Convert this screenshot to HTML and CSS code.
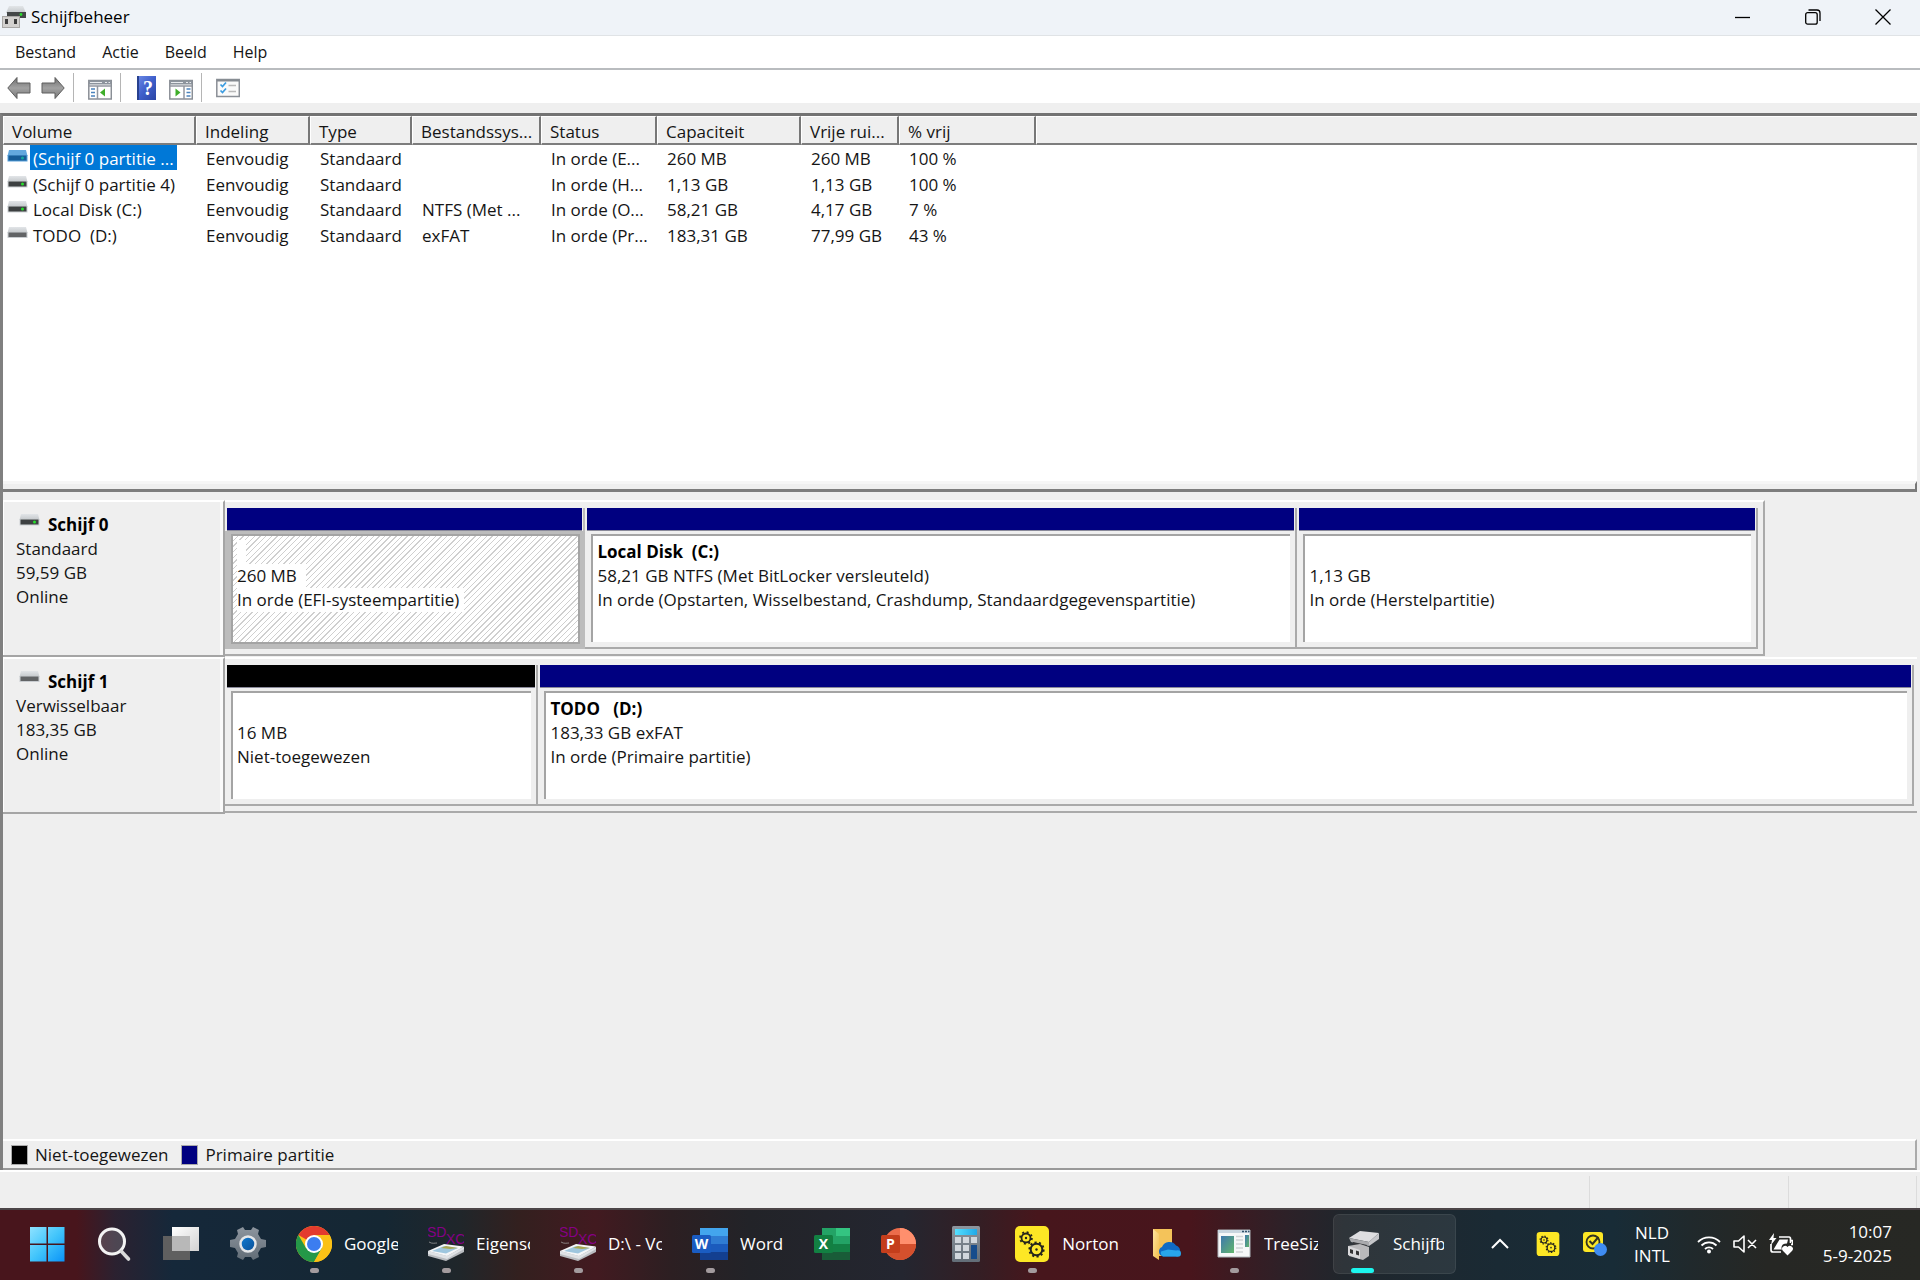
FILE: index.html
```html
<!DOCTYPE html>
<html lang="nl">
<head>
<meta charset="utf-8">
<title>Schijfbeheer</title>
<link rel="stylesheet" href="styles.css">
</head>
<body>
<svg class="defs" aria-hidden="true">
  <defs>
    <linearGradient id="metal" x1="0" y1="0" x2="0" y2="1"><stop offset="0" stop-color="#e2e5e8"/><stop offset="1" stop-color="#c3c7ca"/></linearGradient>
    <linearGradient id="arrow" x1="0" y1="0" x2="0" y2="1"><stop offset="0" stop-color="#6e6e6e"/><stop offset=".5" stop-color="#a2a2a2"/><stop offset="1" stop-color="#777"/></linearGradient>
    <linearGradient id="helpblue" x1="0" y1="0" x2="1" y2="1"><stop offset="0" stop-color="#6d8ae6"/><stop offset=".5" stop-color="#3f5fcb"/><stop offset="1" stop-color="#2a45a4"/></linearGradient>
    <linearGradient id="winblue" x1="0" y1="0" x2="1" y2="1"><stop offset="0" stop-color="#8fe2ff"/><stop offset=".5" stop-color="#42c5fb"/><stop offset="1" stop-color="#0a93f8"/></linearGradient>
    <linearGradient id="gearblue" x1="0" y1="0" x2="1" y2="1"><stop offset="0" stop-color="#0f7cd4"/><stop offset="1" stop-color="#0c4e94"/></linearGradient>
    <linearGradient id="gray" x1="0" y1="0" x2="0" y2="1"><stop offset="0" stop-color="#8d959e"/><stop offset="1" stop-color="#626d77"/></linearGradient>
    <linearGradient id="white" x1="0" y1="0" x2="1" y2="1"><stop offset="0" stop-color="#fff"/><stop offset="1" stop-color="#d2d2d2"/></linearGradient>
    <linearGradient id="folder" x1="0" y1="0" x2="1" y2="1"><stop offset="0" stop-color="#ffe5a0"/><stop offset="1" stop-color="#f3bd4c"/></linearGradient>
    <linearGradient id="tree" x1="0" y1="0" x2="1" y2="1"><stop offset="0" stop-color="#3f78ae"/><stop offset="1" stop-color="#62b56b"/></linearGradient>
    <linearGradient id="cyan" x1="0" y1="0" x2="1" y2="0"><stop offset="0" stop-color="#54e0ff"/><stop offset="1" stop-color="#21a9e8"/></linearGradient>

    <symbol id="disk" viewBox="0 0 21 14">
      <path d="M2 1h17l1.500 6h-20z" fill="url(#metal)"/>
      <path d="M.5 6h20v6.500h-20z" fill="#cdd1d4"/>
      <path d="M1.500 6.500h18v5h-18z" fill="#3d4041"/>
      <circle cx="15.500" cy="9" r="1.500" fill="#27e02b"/>
    </symbol>
    <symbol id="disk-blue" viewBox="0 0 21 14">
      <path d="M2 1h17l1.500 6h-20z" fill="#63a8de"/>
      <path d="M.5 6h20v6.500h-20z" fill="#569fd9"/>
      <path d="M1.500 6.500h18v5h-18z" fill="#175c97"/>
      <circle cx="15.500" cy="9" r="1.500" fill="#16a89d"/>
    </symbol>
    <symbol id="disk-card" viewBox="0 0 21 14">
      <path d="M2 1h17l1.500 6h-20z" fill="url(#metal)"/>
      <path d="M.5 6h20v6h-20z" fill="#c9cdd1"/>
      <path d="M1.500 6.500h18v4.500h-18z" fill="#626466"/>
    </symbol>
    <symbol id="gears" viewBox="0 0 36 36">
      <rect x="1" width="34" height="36" rx="5" fill="#fde725"/>
      <g fill="none" stroke="#23231d">
        <circle cx="12" cy="12" r="4.500" stroke-width="1.800"/>
        <circle cx="12" cy="12" r="5.900" stroke-width="1.800" stroke-dasharray="2 2.630"/>
        <circle cx="22.500" cy="23.500" r="5.800" stroke-width="2"/>
        <circle cx="22.500" cy="23.500" r="7.200" stroke-width="1.800" stroke-dasharray="2.200 2.320"/>
      </g>
      <circle cx="12" cy="12" r="1.200" fill="#23231d"/><circle cx="22.500" cy="23.500" r="1.200" fill="#23231d"/>
    </symbol>
    <symbol id="sdxc" viewBox="0 0 36 36">
      <path d="M0 25v5l18 5 18-9v-5z" fill="#b9bcc0"/>
      <path d="M0 25 16 18l20 2.500L19 30z" fill="#f5f6f7"/>
      <path d="M0 25l19 5 17-9v2L19 33 0 28z" fill="#dfe2e5"/>
      <path d="M4 25l12-5 14 2-12 5.500z" fill="#9ec6de"/>
      <path d="M13 22l5-2 12 2-8 1z" fill="#aaa750"/>
      <path d="M1 16c3 2 6 1 8 1" fill="none" stroke="#aaa" stroke-width=".7"/>
      <g class="sd-text"><text x="-1" y="11">SD</text><text x="18" y="18">XC</text></g>
    </symbol>
  </defs>
</svg>

<main class="window">
  <header class="titlebar">
    <svg class="app-icon" viewBox="0 0 24 24"><path d="M7 1h14l3 7H4z" fill="url(#metal)"/><path d="M5 7h19v6H5z" fill="#444748"/><circle cx="19" cy="9.500" r="1.400" fill="#28dc2d"/><path d="M0 11h18v12H0z" fill="#a9a7a5"/><path d="M1 12h16v10H1z" fill="#d3d1cf"/><path d="M3 14h3v5H3zM12 14h3v5h-3z" fill="#3d3d3d"/></svg>
    <h1 class="title">Schijfbeheer</h1>
    <div class="controls">
      <button type="button" aria-label="Minimaliseren"><svg viewBox="0 0 16 16"><path d="M0 8.500h15"/></svg></button>
      <button type="button" aria-label="Verkleinen"><svg viewBox="0 0 16 16"><rect x=".7" y="3.700" width="11.500" height="11.500" rx="2"/><path d="M3.500 1h8.500q3 0 3 3v8"/></svg></button>
      <button type="button" aria-label="Sluiten"><svg viewBox="0 0 16 16"><path d="M.5.5l15 15M15.500.5l-15 15"/></svg></button>
    </div>
  </header>

  <nav class="menubar">
    <button type="button">Bestand</button><button type="button">Actie</button><button type="button">Beeld</button><button type="button">Help</button>
  </nav>

  <div class="toolbar">
    <div class="group">
      <button type="button" aria-label="Vorige"><svg viewBox="0 0 24 24"><path d="M.8 12 10 1.500v5.500h13v10H10v5.500z" fill="url(#arrow)" stroke="#5e5e5e" stroke-linejoin="round"/></svg></button>
      <button type="button" aria-label="Volgende"><svg viewBox="0 0 24 24"><path d="M23.200 12 14 1.500v5.500H1v10h13v5.500z" fill="url(#arrow)" stroke="#5e5e5e" stroke-linejoin="round"/></svg></button>
    </div>
    <div class="group">
      <button type="button" aria-label="Consolestructuur"><svg viewBox="0 0 24 24"><path d="M.8 4.500h22.500V23H.8z" fill="#fff" stroke="#8a8f96" stroke-width="1.500"/><path d="M1 4.500h22v4H1z" fill="#8d949d"/><path d="M2 6.500h12M17 6.500h2M20.500 6.500h1.500" stroke="#e8ebee"/><path d="M1 10h22M9.500 10v13" stroke="#9297a0" stroke-width="1.500"/><path d="M3 13h4M3 16.500h4M3 20h4" stroke="#4b83bd" stroke-width="1.400"/><path d="M17 12.500v8L12 16.500z" fill="#3fae2a"/></svg></button>
    </div>
    <div class="group">
      <button type="button" aria-label="Help"><svg viewBox="0 0 24 24"><path d="M2 0h19v24H2z" fill="url(#helpblue)"/><path d="M2 0h2v24H2z" fill="#28418f"/><text class="q" x="13" y="19">?</text></svg></button>
      <button type="button" aria-label="Actievenster"><svg viewBox="0 0 24 24"><path d="M.8 4.500h22.500V23H.8z" fill="#fff" stroke="#8a8f96" stroke-width="1.500"/><path d="M1 4.500h22v4H1z" fill="#8d949d"/><path d="M2 6.500h12M17 6.500h2M20.500 6.500h1.500" stroke="#e8ebee"/><path d="M1 10h22M15 10v13" stroke="#9297a0" stroke-width="1.500"/><path d="M17.500 13h4M17.500 16.500h4M17.500 20h4" stroke="#4b83bd" stroke-width="1.400"/><path d="M6.500 12.500v8l5-4z" fill="#3fae2a"/></svg></button>
    </div>
    <div class="group">
      <button type="button" aria-label="Eigenschappen"><svg viewBox="0 0 24 24"><path d="M.8 3.500h22.500v17H.8z" fill="#fafafa" stroke="#8a8f96" stroke-width="1.500"/><path d="M1 3.500h22v2H1z" fill="#858a91"/><path d="M4.500 8.500l2 2 3.500-4M4.500 14.500l2 2 3.500-4" fill="none" stroke="#3b9be0" stroke-width="1.700"/><path d="M12.500 9.500h7.500M12.500 15.500h7.500" stroke="#b9b9b9" stroke-width="1.300"/></svg></button>
    </div>
  </div>

  <div class="panes">
    <section class="list">
      <table class="volumes">
        <colgroup><col class="c-volume"><col class="c-layout"><col class="c-type"><col class="c-fs"><col class="c-status"><col class="c-cap"><col class="c-free"><col class="c-pct"><col></colgroup>
        <thead><tr><th>Volume</th><th>Indeling</th><th>Type</th><th>Bestandssys...</th><th>Status</th><th>Capaciteit</th><th>Vrije rui...</th><th>% vrij</th><th></th></tr></thead>
        <tbody>
          <tr><td class="name"><svg class="disk"><use href="#disk-blue"/></svg><span class="selected">(Schijf 0 partitie ...</span></td><td>Eenvoudig</td><td>Standaard</td><td></td><td>In orde (E...</td><td>260 MB</td><td>260 MB</td><td>100 %</td><td></td></tr>
          <tr><td class="name"><svg class="disk"><use href="#disk"/></svg><span>(Schijf 0 partitie 4)</span></td><td>Eenvoudig</td><td>Standaard</td><td></td><td>In orde (H...</td><td>1,13 GB</td><td>1,13 GB</td><td>100 %</td><td></td></tr>
          <tr><td class="name"><svg class="disk"><use href="#disk"/></svg><span>Local Disk (C:)</span></td><td>Eenvoudig</td><td>Standaard</td><td>NTFS (Met ...</td><td>In orde (O...</td><td>58,21 GB</td><td>4,17 GB</td><td>7 %</td><td></td></tr>
          <tr><td class="name"><svg class="disk"><use href="#disk-card"/></svg><span>TODO&nbsp; (D:)</span></td><td>Eenvoudig</td><td>Standaard</td><td>exFAT</td><td>In orde (Pr...</td><td>183,31 GB</td><td>77,99 GB</td><td>43 %</td><td></td></tr>
        </tbody>
      </table>
    </section>
    <div class="splitter"></div>

    <section class="graph">
      <article class="drive">
        <div class="drive-info">
          <h2><svg class="disk"><use href="#disk"/></svg>Schijf 0</h2>
          <p>Standaard</p><p>59,59 GB</p><p>Online</p>
        </div>
        <div class="lane"><div class="track" style="width: 91%">
          <div class="part picked" style="flex-grow: 359"><div class="bar"></div><div class="face"><div class="body"><p><span>&nbsp;&nbsp;</span></p><p><span>260 MB&nbsp;&nbsp;</span></p><p><span>In orde (EFI-systeempartitie)&nbsp;</span></p></div></div></div>
          <div class="part" style="flex-grow: 711"><div class="bar"></div><div class="face"><div class="body"><h3>Local Disk&nbsp; (C:)</h3><p>58,21 GB NTFS (Met BitLocker versleuteld)</p><p>In orde (Opstarten, Wisselbestand, Crashdump, Standaardgegevenspartitie)</p></div></div></div>
          <div class="part" style="flex-grow: 459"><div class="bar"></div><div class="face"><div class="body"><p>&nbsp;</p><p>1,13 GB</p><p>In orde (Herstelpartitie)</p></div></div></div>
        </div></div>
      </article>
      <article class="drive">
        <div class="drive-info">
          <h2><svg class="disk"><use href="#disk-card"/></svg>Schijf 1</h2>
          <p>Verwisselbaar</p><p>183,35 GB</p><p>Online</p>
        </div>
        <div class="lane"><div class="track full" style="width: 100%">
          <div class="part free" style="flex-grow: 312"><div class="bar"></div><div class="face"><div class="body"><p>&nbsp;</p><p>16 MB</p><p>Niet-toegewezen</p></div></div></div>
          <div class="part" style="flex-grow: 1376"><div class="bar"></div><div class="face"><div class="body"><h3>TODO&nbsp;&nbsp; (D:)</h3><p>183,33 GB exFAT</p><p>In orde (Primaire partitie)</p></div></div></div>
        </div></div>
      </article>
    </section>
    <div class="legend"><span class="swatch black"></span><span class="key">Niet-toegewezen</span><span class="swatch"></span><span class="key">Primaire partitie</span></div>
  </div>
  <footer class="status"><span></span><span></span><span></span></footer>
</main>

<nav class="taskbar">
  <button type="button" class="app" aria-label="Start"><svg class="ico" viewBox="0 0 36 36"><path d="M1 1h16.500v16.500H1zM19 1h16.500v16.500H19zM1 19h16.500v16.500H1zM19 19h16.500v16.500H19z" fill="url(#winblue)"/></svg></button>
  <button type="button" class="app" aria-label="Zoeken"><svg class="ico" viewBox="0 0 36 36"><circle cx="16" cy="15.500" r="12.500" fill="#fff" fill-opacity=".17" stroke="#f3f3f3" stroke-width="3"/><path d="M25.500 25.500l7 7.500" stroke="#dadada" stroke-width="3.600" stroke-linecap="round"/></svg></button>
  <button type="button" class="app" aria-label="Taakweergave"><svg class="ico" viewBox="0 0 36 36"><path d="M0 10h27v24H0z" fill="#5f5f5f"/><path d="M9 1h27v24H9z" fill="url(#white)"/><path d="M9 10h18v15H9z" fill="#b8b8b8"/></svg></button>
  <button type="button" class="app" aria-label="Instellingen"><svg class="ico" viewBox="0 0 36 36"><path d="M13 1l2 3h6l2-3 6 3-1 4 3 5 5 1v7l-5 1-3 5 1 4-6 3-2-3h-6l-2 3-6-3 1-4-3-5-5-1v-7l5-1 3-5-1-4z" fill="url(#gray)"/><circle cx="18" cy="18" r="7.500" fill="url(#gearblue)" stroke="#e4e6e8" stroke-width="2.500"/></svg></button>
  <button type="button" class="app wide running"><svg class="ico" viewBox="0 0 36 36"><circle cx="18" cy="18" r="18" fill="#fbc116"/><path d="M18 18 2.400 9A18 18 0 0 1 33.600 9z" fill="#e33b2e"/><path d="M2.400 9A18 18 0 0 0 18 36l8-14-16 0z" fill="#249848"/><path d="M18 9h15.600A18 18 0 0 1 18 36l8-14z" fill="#fbc116"/><circle cx="18" cy="18" r="9" fill="#fff"/><circle cx="18" cy="18" r="7" fill="#3c7df0"/></svg><span class="label">Google</span></button>
  <button type="button" class="app wide running"><svg class="ico"><use href="#sdxc"/></svg><span class="label">Eigensc</span></button>
  <button type="button" class="app wide running"><svg class="ico"><use href="#sdxc"/></svg><span class="label">D:\ - Vo</span></button>
  <button type="button" class="app wide running"><svg class="ico office" viewBox="0 0 36 36"><path d="M8 2h28v8H8z" fill="#43a5ed"/><path d="M8 10h28v8H8z" fill="#2f7cd3"/><path d="M8 18h28v8H8z" fill="#1b5bbd"/><path d="M8 26h28v8H8z" fill="#133f90"/><rect y="9" width="19" height="18" rx="1.500" fill="#1a5cc2"/><text x="9.500" y="23">W</text></svg><span class="label">Word</span></button>
  <button type="button" class="app" aria-label="Excel"><svg class="ico office" viewBox="0 0 36 36"><path d="M8 2h14v16H8z" fill="#23a366"/><path d="M22 2h14v8H22z" fill="#34c481"/><path d="M22 10h14v8H22z" fill="#23a366"/><path d="M8 18h28v8H8z" fill="#138045"/><path d="M8 26h28v8H8z" fill="#195c38"/><rect y="9" width="19" height="18" rx="1.500" fill="#128042"/><text x="9.500" y="23">X</text></svg></button>
  <button type="button" class="app" aria-label="PowerPoint"><svg class="ico office" viewBox="0 0 36 36"><circle cx="19" cy="18" r="16" fill="#ec6c4b"/><path d="M19 2a16 16 0 0 1 16 16H19z" fill="#ff8f6d"/><path d="M35 18a16 16 0 0 1-32 0z" fill="#d4502d"/><rect y="9" width="19" height="18" rx="1.500" fill="#c43e1c"/><text x="9.500" y="23">P</text></svg></button>
  <button type="button" class="app" aria-label="Rekenmachine"><svg class="ico" viewBox="0 0 36 36"><rect x="4" width="28" height="36" rx="1.500" fill="url(#gray)"/><path d="M7 3h22v6H7z" fill="url(#cyan)"/><path d="M7 11h6v6H7zM15 11h6v6h-6zM23 11h6v6h-6zM7 19h6v6H7zM15 19h6v6h-6zM7 27h6v6H7zM15 27h6v6h-6z" fill="#d1d7dd"/><path d="M23 19h6v14h-6z" fill="#164c8c"/></svg></button>
  <button type="button" class="app wide running"><svg class="ico"><use href="#gears"/></svg><span class="label whole">Norton</span></button>
  <button type="button" class="app" aria-label="OneDrive"><svg class="ico" viewBox="0 0 36 36"><path d="M4 3h19v27H8z" fill="#f4c35a"/><path d="M4 3l6 5v26l-6-4z" fill="url(#folder)"/><path d="M14 30.500a5 5 0 0 1-1-9.500 8 8 0 0 1 14-1.500 6 6 0 0 1 1 11z" fill="#0f6bc5"/><path d="M14 30.500a4.500 4.500 0 0 1-2-5l7-2 8 1q5-1 5 3t-5 3z" fill="#28a5ea"/></svg></button>
  <button type="button" class="app wide running"><svg class="ico" viewBox="0 0 36 36"><path d="M2 4h32v27H2z" fill="#f6f7f8" stroke="#aeb4b9"/><path d="M2 4h32v3H2z" fill="#c9d5df"/><path d="M26 5.500h2M29 5.500h2M32 5.500h1.500" stroke="#31516b" stroke-width="1.500"/><path d="M5 10h13v17H5z" fill="url(#tree)"/><path d="M29 9h4v12h-4z" fill="url(#tree)"/><path d="M20 10.500h7M20 14h7M20 18h7M20 22h7M20 26h7" stroke="#d0d3d5" stroke-width="1.500"/></svg><span class="label">TreeSiz</span></button>
  <button type="button" class="app wide active"><svg class="ico" viewBox="0 0 36 36"><path d="M4 12 15 5l19 2-10 9z" fill="#dedee0"/><path d="M4 12l20 4v4L6 16z" fill="#a9aaad"/><path d="M24 16 34 7v6l-10 7z" fill="#c5c6c9"/><path d="M8 16l14 3-2 5-12-3z" fill="#35373a"/><path d="M3 20l12-2 9 3v9l-6 4-14-4z" fill="#b9b9bb"/><path d="M3 20l12 4v9l-12-4z" fill="#d9d9db"/><path d="M5 23l3 1v4l-3-1zM11 24.500l3 1v4l-3-1z" fill="#333"/></svg><span class="label">Schijfb</span></button>

  <div class="tray">
    <button type="button" class="chevron" aria-label="Verborgen pictogrammen"><svg viewBox="0 0 24 24"><path d="M4 16l8-8 8 8" fill="none" stroke="#fff" stroke-width="2"/></svg></button>
    <button type="button" class="spaced" aria-label="Norton"><svg viewBox="0 0 24 24"><use href="#gears" width="24" height="24"/></svg></button>
    <button type="button" class="spaced" aria-label="Beveiliging"><svg viewBox="0 0 24 24"><rect width="20" height="20" rx="3" fill="#fde725"/><circle cx="10" cy="10" r="6.500" fill="none" stroke="#333320" stroke-width="1.800"/><path d="M6.500 9l3 3 6-7" fill="none" stroke="#333320" stroke-width="2"/><circle cx="17.500" cy="17.500" r="6.500" fill="#3f8cf2"/></svg></button>
    <button type="button" class="lang">NLD<br>INTL</button>
    <button type="button" class="system" aria-label="Netwerk, geluid en batterij">
      <svg viewBox="0 0 24 24"><g fill="none" stroke="#fff" stroke-width="1.800"><path d="M1 10a15.500 15.500 0 0 1 22 0M4.500 13.500a10.500 10.500 0 0 1 15 0M8 17a5.700 5.700 0 0 1 8 0"/></g><circle cx="12" cy="19.500" r="2" fill="#fff"/></svg>
      <svg viewBox="0 0 24 24"><path d="M1 9h4.500L11 4v16l-5.500-5H1zM15 8l8 8M23 8l-8 8" fill="none" stroke="#fff" stroke-width="1.600" stroke-linejoin="round"/></svg>
      <svg viewBox="0 0 24 24"><path d="M10 5h10q1.500 0 1.500 2v4M2 12v6q0 2 2 2h8M22 8.500h1.500v4H22" fill="none" stroke="#fff" stroke-width="1.700"/><path d="M10.500 7.500H19l-1 4q-6 0-5.500 5l.5 1H4.500z" fill="#fff"/><path d="M5 1L0 8h3l-1 5 5.500-7H4.500z" fill="#fff"/><path d="M18.500 23.500l-4.700-4.800a2.900 2.900 0 0 1 4.700-3.700 2.900 2.900 0 0 1 4.700 3.700z" fill="#fff"/></svg>
    </button>
    <button type="button" class="clock">10:07<br>5-9-2025</button>
  </div>
</nav>
</body>
</html>
```

FILE: styles.css
```css
* { box-sizing: border-box; }
body {
  margin: 0;
  min-height: 100vh;
  display: flex;
  flex-direction: column;
  background: #efefef;
  color: #151515;
  font: 17px/24px "Open Sans", "Noto Sans", sans-serif;
}
h1, h2, h3, p { margin: 0; font-size: inherit; font-weight: 400; }
button { margin: 0; padding: 0; border: 0; background: none; color: inherit; font: inherit; }
svg { display: block; flex: none; }
.defs { position: absolute; width: 0; height: 0; }

.window { flex: 1; display: flex; flex-direction: column; }

.titlebar { display: flex; align-items: center; height: 36px; padding: 0 2px 2px; background: #eff3f8; border-bottom: 1px solid #e0e3e6; }
.app-icon { width: 24px; height: 24px; }
.title { flex: 1; padding-left: 5px; color: #000; }
.controls { display: flex; }
.controls button { width: 70px; height: 32px; display: flex; align-items: center; justify-content: center; }
.controls svg { width: 16px; height: 16px; fill: none; stroke: #000; stroke-width: 1.3; }

.menubar { display: flex; align-items: center; gap: 26px; height: 34px; padding-left: 15px; background: #fff; border-bottom: 2px solid #b9bcbf; font-size: 16px; }
.toolbar { display: flex; align-items: center; height: 33px; padding-top: 2px; background: #fff; }
.group { display: flex; align-items: center; gap: 10px; height: 29px; padding: 0 8px 0 7px; }
.group + .group { padding-left: 14px; border-left: 1px solid #b5b5b5; }
.toolbar svg { width: 24px; height: 24px; }
.q { font: 700 20px "Liberation Serif", serif; text-anchor: middle; fill: #fff; }

.panes { flex: 1; display: flex; flex-direction: column; margin: 10px 3px 0 0; border-top: 3px solid #737373; border-left: 3px solid #808080; }
.list { height: 365px; background: #fff; }
.volumes { width: 100%; table-layout: fixed; border-collapse: separate; border-spacing: 0; }
.volumes th { height: 29px; padding: 4px 0 0 8px; line-height: 20px; text-align: left; font-weight: 400; background: #efefef; border: solid; border-width: 1px 2px 2px 1px; border-color: #fff #777 #7d7d7d #fff; white-space: nowrap; overflow: hidden; }
.volumes th:last-child { border-right: 0; }
.volumes td { height: 26px; padding: 3px 0 0 10px; line-height: 22px; vertical-align: top; white-space: nowrap; }
.volumes tr:nth-child(even) td { height: 25px; }
.volumes td.name { display: flex; align-items: flex-start; gap: 2px; padding: 0 0 0 4px; }
.disk { width: 21px; height: 14px; }
.name .disk { margin-top: 4px; }
.name span { padding: 3px 3px 0; }
.selected { background: #0078d7; color: #fff; }
.c-volume { width: 193px; }
.c-layout { width: 114px; }
.c-type { width: 102px; }
.c-fs { width: 129px; }
.c-status { width: 116px; }
.c-cap { width: 144px; }
.c-free { width: 98px; }
.c-pct { width: 137px; }
.splitter { height: 11px; border-top: 3px solid #f6f6f6; border-right: 2px solid #777; border-bottom: 3px solid #7d7d7d; }

.graph { flex: 1; padding-top: 8px; }
.drive { display: flex; height: 157px; }
.drive-info { flex: 0 0 222px; padding: 11px 0 0 13px; border-top: 2px solid #fff; border-right: 2px solid #a5a5a5; border-bottom: 2px solid #a5a5a5; box-shadow: inset -3px 0 #fafafa, inset 1px 0 #fff; }
.drive-info h2 { display: flex; align-items: center; gap: 8px; padding-left: 3px; color: #000; font-weight: 700; }
.drive-info .disk { margin-bottom: 10px; }
.lane { flex: 1; min-width: 0; }
.track { display: flex; height: 156px; padding: 6px 5px 5px 0; border-top: 2px solid #fff; border-bottom: 2px solid #aaa; border-right: 2px solid #aaa; }
.track.full { padding-right: 3px; border-right: 0; }
.part { flex: 1 1 0; min-width: 0; display: flex; flex-direction: column; border-right: 2px solid #aaa; border-bottom: 2px solid #aaa; }
.bar { height: 23px; margin: 0 1px 0 2px; background: #000080; border-bottom: 1px solid #8a8a9a; }
.free .bar { background: #000; }
.face { flex: 1; padding: 3px 5px 5px 6px; }
.body { height: 100%; padding: 4px 0 0 4px; background: #fff; border: solid; border-width: 2px 0 0 2px; border-color: #a4a4a4; white-space: nowrap; overflow: hidden; }
.body h3 { color: #000; font-weight: 700; }
.picked { border-color: #bcbcbc; }
.picked .face { background: #bcbcbc; padding: 3px 3px 3px 6px; }
.picked .body { border-width: 2px; background: repeating-linear-gradient(135deg, #fff 0 3px, #cfcfcf 3px 4px); }
.picked span { display: inline-block; background: #fff; }

.legend { display: flex; align-items: center; height: 31px; padding-left: 8px; border-top: 2px solid #fff; border-right: 2px solid #aaa; border-bottom: 2px solid #999; }
.swatch { width: 17px; height: 20px; background: #000080; border: 1px solid #aaa; }
.swatch.black { background: #000; }
.key { padding: 0 13px 0 7px; }
.status { display: flex; justify-content: flex-end; height: 38px; padding: 4px 3px 0 0; border-top: 2px solid #fff; }
.status span { width: 128px; border-right: 1px solid #dcdcdc; }
.status span:nth-child(2) { width: 199px; }

.taskbar {
  display: flex;
  align-items: center;
  height: 72px;
  padding: 0 0 3px 13px;
  color: #fff;
  border-top: 2px solid #4c4548;
  background: linear-gradient(90deg, #48151c 0, #48151c 4%, #2b2130 6%, #15283a 9%, #152733 20%, #20262a 24%, #33201f 27%, #421a20 31%, #2c1f22 35%, #222328 39%, #242630 47%, #341e24 51%, #47161c 54%, #48151c 62%, #2d2128 67%, #20262c 70%, #1a2a34 78%, #182c37 84%, #20292c 88%, #262724 92%, #272824 100%);
}
.app { position: relative; flex: 0 0 67px; height: 60px; display: flex; align-items: center; justify-content: center; }
.ico { width: 36px; height: 36px; }
.app.wide { flex: 0 0 auto; justify-content: flex-start; gap: 12px; padding: 0 15px; }
.label { width: 54px; overflow: hidden; white-space: nowrap; text-align: left; }
.label:not(.whole) { max-width: max-content; }
.label.whole { width: auto; }
.running::after, .active::after { content: ""; position: absolute; left: 29px; bottom: 1px; width: 9px; height: 5px; border-radius: 3px; background: #a39b9e; }
.app.active { padding: 0 12px; border-radius: 6px; background: rgba(255, 255, 255, .07); box-shadow: inset 0 0 0 1px rgba(255, 255, 255, .07); }
.active .label { width: 51px; }
.active::after { left: 18px; width: 23px; background: #1cf6ee; }
.sd-text { font: 14px "Liberation Sans", sans-serif; fill: #860086; }
.office text { font: 700 14px "Open Sans", sans-serif; text-anchor: middle; fill: #fff; }

.tray { flex: 1; display: flex; align-items: center; justify-content: flex-end; padding-right: 28px; }
.tray svg { width: 24px; height: 24px; }
.chevron { margin-right: 24px; }
.spaced { margin-right: 23px; }
.lang { width: 44px; text-align: center; line-height: 23px; }
.system { display: flex; gap: 12px; margin: 0 13px 0 23px; }
.clock { width: 86px; text-align: right; line-height: 24px; }
```
